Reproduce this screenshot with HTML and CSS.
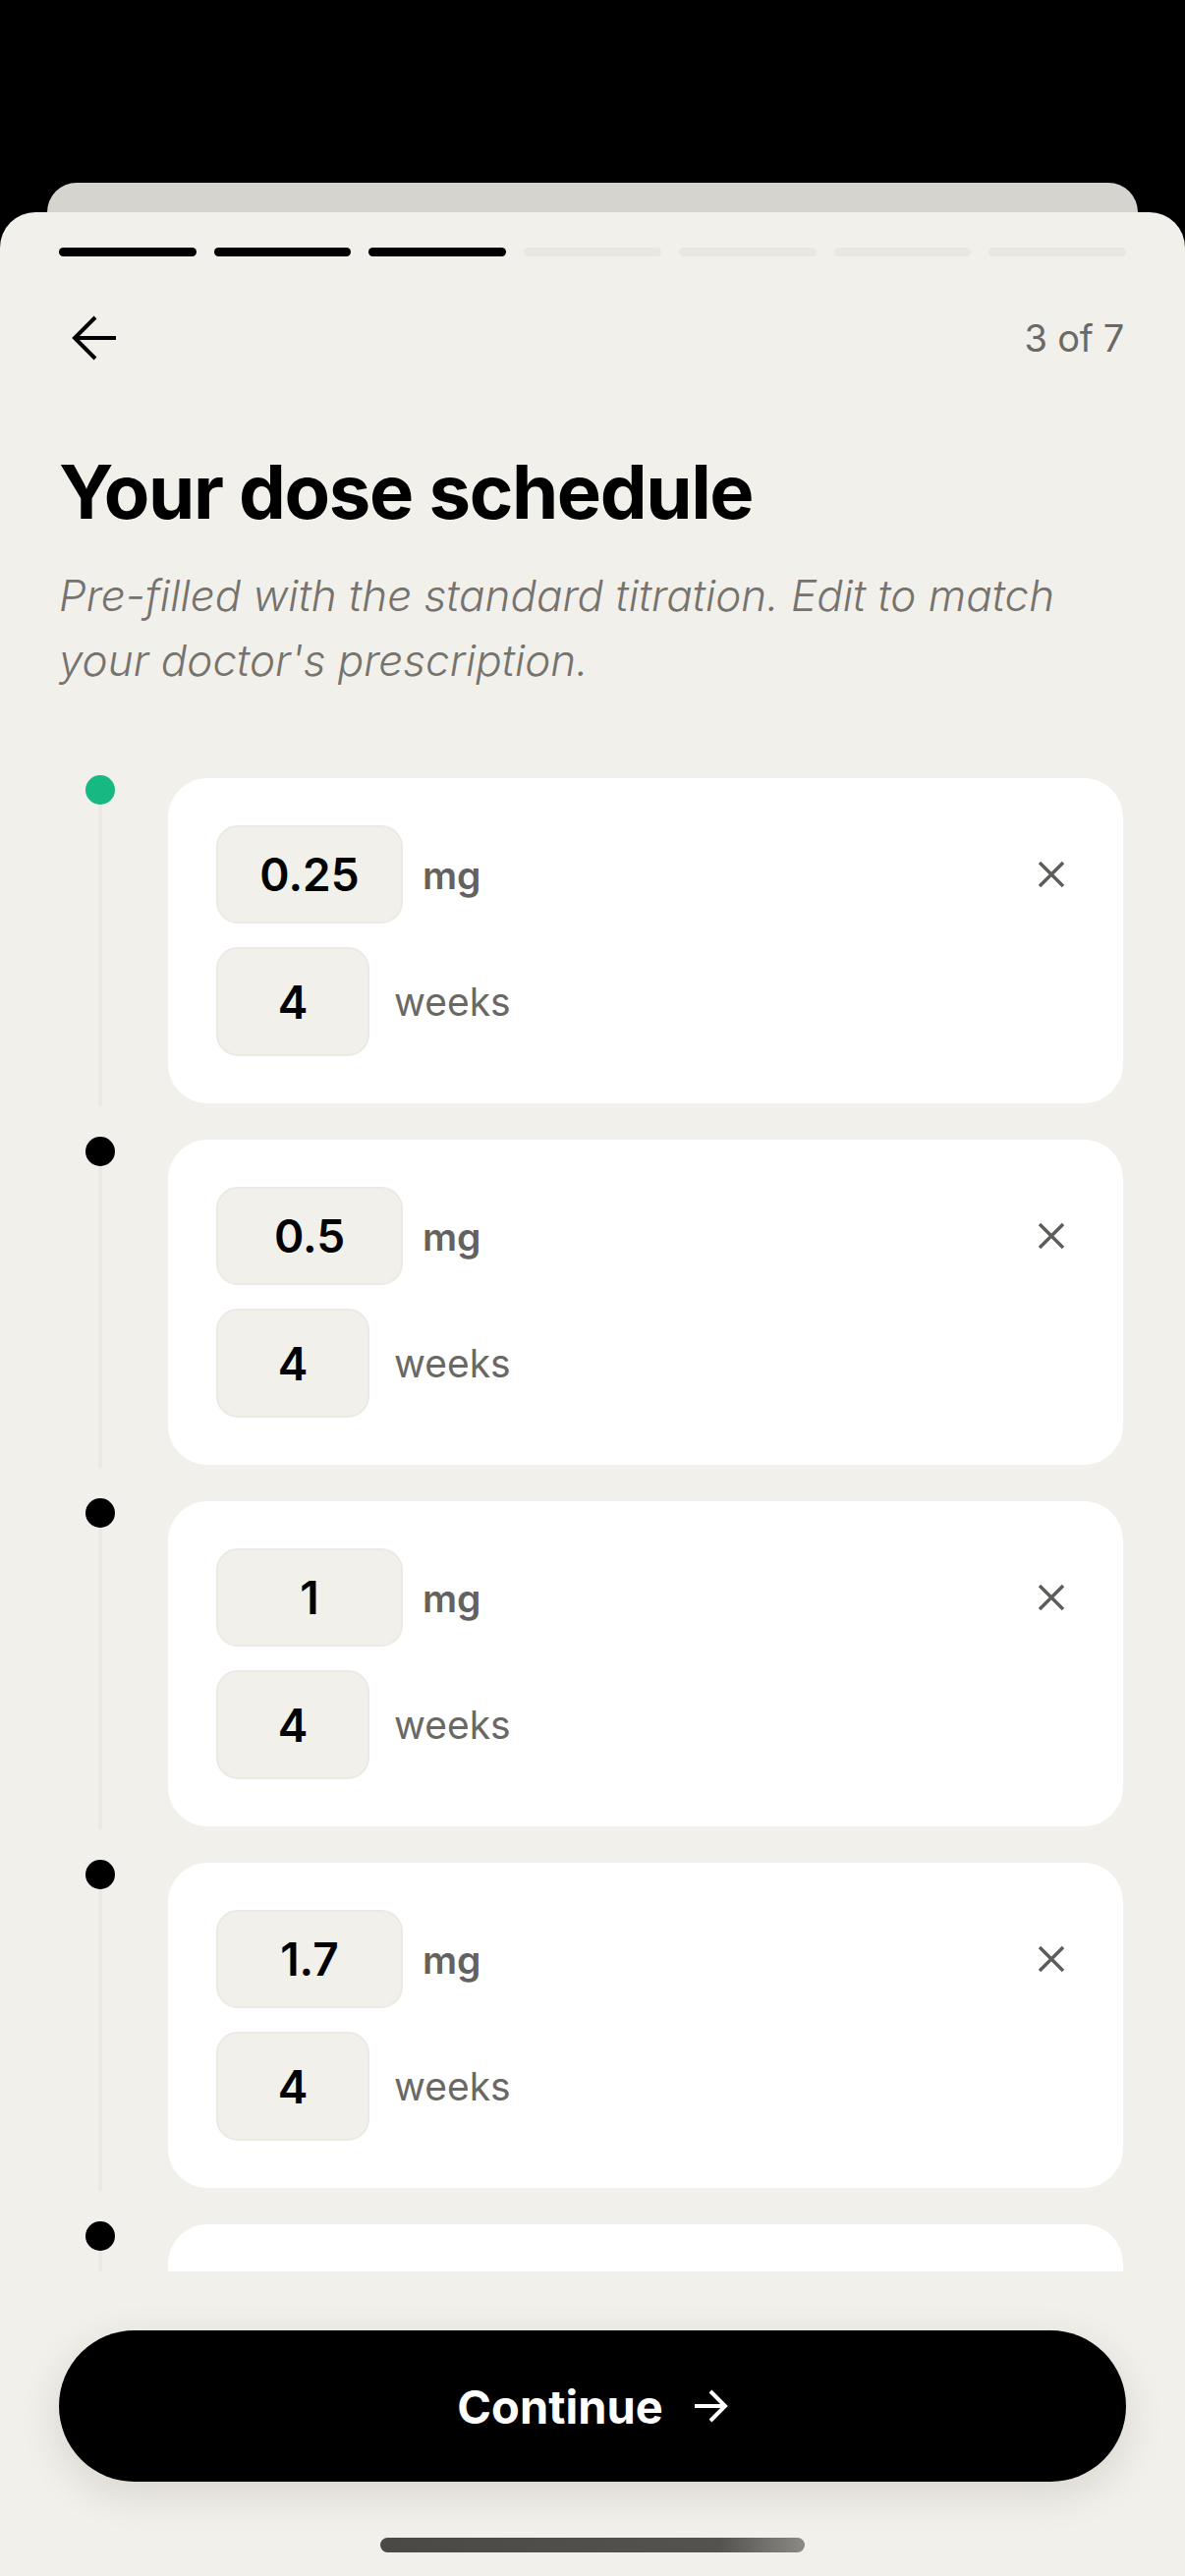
FILE: index.html
```html
<!DOCTYPE html>
<html lang="en">
<head>
<meta charset="utf-8">
<title>Your dose schedule</title>
<link rel="stylesheet" href="styles.css">
</head>
<body>
<div class="screen">
  <div class="peek"></div>
  <div class="sheet">
    <div class="progress">
      <span class="seg on"></span><span class="seg on"></span><span class="seg on"></span>
      <span class="seg"></span><span class="seg"></span><span class="seg"></span><span class="seg"></span>
    </div>
    <div class="header">
      <svg class="back" viewBox="0 0 48 48" width="48" height="48" aria-label="Back">
        <path d="M46 24H4M25 3L4 24L25 45" fill="none" stroke="#000" stroke-width="4" stroke-linecap="butt" stroke-linejoin="miter"/>
      </svg>
      <span class="step">3 of 7</span>
    </div>
    <h1 class="title">Your dose schedule</h1>
    <p class="subtitle">Pre-filled with the standard titration. Edit to match your doctor's prescription.</p>

    <div class="list">
      <div class="item">
        <div class="rail"><span class="dot current"></span><span class="line"></span></div>
        <div class="card">
          <div class="row">
            <div class="field dose">0.25</div><span class="unit">mg</span>
            <svg class="remove" viewBox="0 0 28 28" width="28" height="28"><path d="M2 2L26 26M26 2L2 26" stroke="#5f5d59" stroke-width="3.5"/></svg>
          </div>
          <div class="row">
            <div class="field weeks">4</div><span class="wlabel">weeks</span>
          </div>
        </div>
      </div>
      <div class="item">
        <div class="rail"><span class="dot"></span><span class="line"></span></div>
        <div class="card">
          <div class="row">
            <div class="field dose">0.5</div><span class="unit">mg</span>
            <svg class="remove" viewBox="0 0 28 28" width="28" height="28"><path d="M2 2L26 26M26 2L2 26" stroke="#5f5d59" stroke-width="3.5"/></svg>
          </div>
          <div class="row">
            <div class="field weeks">4</div><span class="wlabel">weeks</span>
          </div>
        </div>
      </div>
      <div class="item">
        <div class="rail"><span class="dot"></span><span class="line"></span></div>
        <div class="card">
          <div class="row">
            <div class="field dose">1</div><span class="unit">mg</span>
            <svg class="remove" viewBox="0 0 28 28" width="28" height="28"><path d="M2 2L26 26M26 2L2 26" stroke="#5f5d59" stroke-width="3.5"/></svg>
          </div>
          <div class="row">
            <div class="field weeks">4</div><span class="wlabel">weeks</span>
          </div>
        </div>
      </div>
      <div class="item">
        <div class="rail"><span class="dot"></span><span class="line"></span></div>
        <div class="card">
          <div class="row">
            <div class="field dose">1.7</div><span class="unit">mg</span>
            <svg class="remove" viewBox="0 0 28 28" width="28" height="28"><path d="M2 2L26 26M26 2L2 26" stroke="#5f5d59" stroke-width="3.5"/></svg>
          </div>
          <div class="row">
            <div class="field weeks">4</div><span class="wlabel">weeks</span>
          </div>
        </div>
      </div>
      <div class="item">
        <div class="rail"><span class="dot"></span><span class="line"></span></div>
        <div class="card card-peek"></div>
      </div>
    </div>

    <div class="footer">
      <button class="continue" type="button">
        <span>Continue</span>
        <svg viewBox="0 0 36 36" width="36" height="36"><path d="M2 18H33M18 3L33 18L18 33" fill="none" stroke="#fff" stroke-width="4"/></svg>
      </button>
      <div class="home"></div>
    </div>
  </div>
</div>
</body>
</html>
```

FILE: styles.css
```css
* { box-sizing: border-box; }
html, body { margin: 0; padding: 0; }
body {
  background: #000;
  font-family: Inter, "Noto Sans", "Liberation Sans", sans-serif;
  width: 1206px;
  height: 2622px;
  overflow: hidden;
}
.screen {
  padding-top: 186px;
  height: 2622px;
  display: flex;
  flex-direction: column;
}
.peek {
  height: 30px;
  margin: 0 48px;
  background: #d6d4cf;
  border-radius: 30px 30px 0 0;
  flex: none;
}
.sheet {
  flex: 1;
  background: #f2f0eb;
  border-radius: 36px 36px 0 0;
  display: flex;
  flex-direction: column;
  padding-top: 36px;
  min-height: 0;
}
.progress {
  display: flex;
  gap: 18px;
  padding: 0 60px;
}
.seg {
  flex: 1;
  height: 9px;
  border-radius: 5px;
  background: #eae7e1;
}
.seg.on { background: #000; }

.header {
  display: flex;
  align-items: center;
  justify-content: space-between;
  margin-top: 59px;
  padding: 0 62px 0 72px;
  height: 48px;
}
.back { display: block; }
.step {
  font-size: 38px;
  color: #6b6965;
  letter-spacing: -0.3px;
}
.title {
  margin: 88px 60px 0;
  font-size: 76px;
  line-height: 88px;
  font-weight: 700;
  letter-spacing: -1.4px;
  color: #000;
}
.subtitle {
  margin: 29px 60px 0;
  font-size: 44px;
  line-height: 66px;
  font-style: italic;
  font-weight: 300;
  color: #76736e;
}

.list {
  margin-top: 55px;
  padding: 32px 63px 0 87px;
  flex: 1;
  min-height: 0;
  overflow: hidden;
}
.item {
  display: flex;
  gap: 54px;
  padding-bottom: 37px;
}
.rail {
  width: 30px;
  flex: none;
  display: flex;
  flex-direction: column;
  align-items: center;
}
.dot {
  width: 30px;
  height: 30px;
  border-radius: 50%;
  background: #000;
  margin-top: -3px;
  flex: none;
}
.dot.current { background: #15b981; }
.line {
  flex: 1;
  width: 4px;
  background: #ece9e3;
  margin-bottom: -3px;
}
.card {
  flex: 1;
  background: #fff;
  border-radius: 40px;
  padding: 48px 59px 48px 49px;
  display: flex;
  flex-direction: column;
  gap: 24px;
}
.card-peek { height: 331px; }
.row {
  display: flex;
  align-items: center;
}
.field {
  background: #f2f0eb;
  border: 2px solid #ece9e3;
  border-radius: 22px;
  display: flex;
  align-items: center;
  justify-content: center;
  font-size: 46px;
  font-weight: 600;
  color: #000;
}
.field.dose { width: 190px; height: 100px; }
.field.weeks { width: 156px; height: 111px; }
.unit {
  margin-left: 20px;
  font-size: 39px;
  font-weight: 600;
  color: #65625e;
  flex: 1;
}
.wlabel {
  margin-left: 25px;
  font-size: 39px;
  color: #6b6864;
}
.remove { display: block; flex: none; }

.footer {
  flex: none;
  height: 310px;
  padding: 60px 60px 0;
  display: flex;
  flex-direction: column;
  align-items: center;
}
.continue {
  width: 100%;
  height: 154px;
  border: none;
  border-radius: 77px;
  background: #000;
  color: #fff;
  font-family: inherit;
  font-size: 47px;
  font-weight: 700;
  display: flex;
  align-items: center;
  justify-content: center;
  gap: 30px;
  box-shadow: 0 12px 40px rgba(60, 50, 30, 0.14);
}
.continue svg { display: block; }
.home {
  margin-top: 57px;
  width: 432px;
  height: 15px;
  border-radius: 8px;
  background: linear-gradient(to right, #4a4946 0%, #55534f 80%, #8c8a85 100%);
}
```
